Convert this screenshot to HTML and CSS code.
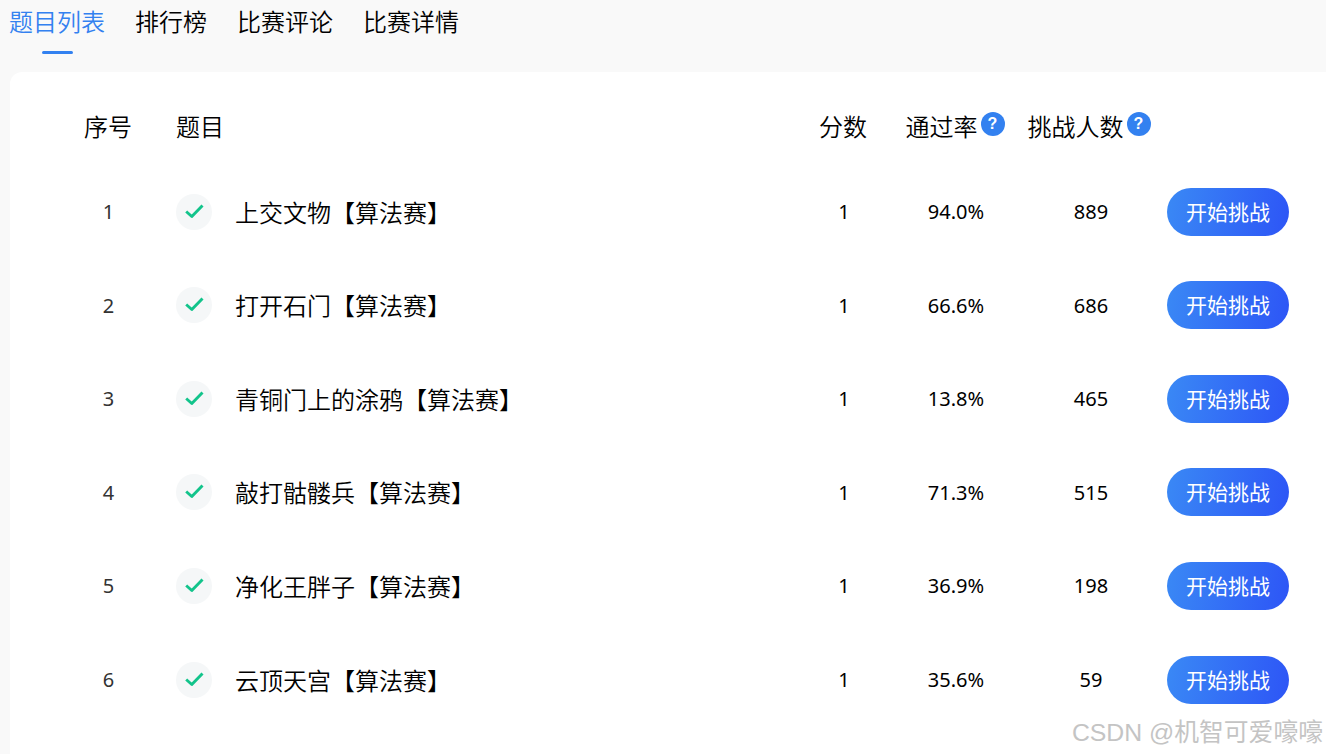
FILE: index.html
```html
<!DOCTYPE html>
<html lang="zh-CN">
<head>
<meta charset="utf-8">
<title>题目列表</title>
<link rel="stylesheet" href="styles.css">
</head>
<body>
<nav class="tabs">
  <a class="tab active">题目列表</a>
  <a class="tab">排行榜</a>
  <a class="tab">比赛评论</a>
  <a class="tab">比赛详情</a>
</nav>
<main class="card">
  <div class="row head">
    <div class="c-num">序号</div>
    <div class="c-title">题目</div>
    <div class="c-center">分数</div>
    <div class="c-center">通过率<span class="help">?</span></div>
    <div class="c-center">挑战人数<span class="help">?</span></div>
    <div></div>
  </div>
  <div class="row">
    <div class="c-num">1</div>
    <div class="c-title"><span class="status"><svg viewBox="0 0 24 24" class="check"><path d="M4.200 11.500 L9.800 16.500 L20.500 5.500"/></svg></span><span class="name">上交文物【算法赛】</span></div>
    <div class="c-center val">1</div><div class="c-center val pct">94.0%</div><div class="c-center val">889</div>
    <div><button class="go">开始挑战</button></div>
  </div>
  <div class="row">
    <div class="c-num">2</div>
    <div class="c-title"><span class="status"><svg viewBox="0 0 24 24" class="check"><path d="M4.200 11.500 L9.800 16.500 L20.500 5.500"/></svg></span><span class="name">打开石门【算法赛】</span></div>
    <div class="c-center val">1</div><div class="c-center val pct">66.6%</div><div class="c-center val">686</div>
    <div><button class="go">开始挑战</button></div>
  </div>
  <div class="row">
    <div class="c-num">3</div>
    <div class="c-title"><span class="status"><svg viewBox="0 0 24 24" class="check"><path d="M4.200 11.500 L9.800 16.500 L20.500 5.500"/></svg></span><span class="name">青铜门上的涂鸦【算法赛】</span></div>
    <div class="c-center val">1</div><div class="c-center val pct">13.8%</div><div class="c-center val">465</div>
    <div><button class="go">开始挑战</button></div>
  </div>
  <div class="row">
    <div class="c-num">4</div>
    <div class="c-title"><span class="status"><svg viewBox="0 0 24 24" class="check"><path d="M4.200 11.500 L9.800 16.500 L20.500 5.500"/></svg></span><span class="name">敲打骷髅兵【算法赛】</span></div>
    <div class="c-center val">1</div><div class="c-center val pct">71.3%</div><div class="c-center val">515</div>
    <div><button class="go">开始挑战</button></div>
  </div>
  <div class="row">
    <div class="c-num">5</div>
    <div class="c-title"><span class="status"><svg viewBox="0 0 24 24" class="check"><path d="M4.200 11.500 L9.800 16.500 L20.500 5.500"/></svg></span><span class="name">净化王胖子【算法赛】</span></div>
    <div class="c-center val">1</div><div class="c-center val pct">36.9%</div><div class="c-center val">198</div>
    <div><button class="go">开始挑战</button></div>
  </div>
  <div class="row">
    <div class="c-num">6</div>
    <div class="c-title"><span class="status"><svg viewBox="0 0 24 24" class="check"><path d="M4.200 11.500 L9.800 16.500 L20.500 5.500"/></svg></span><span class="name">云顶天宫【算法赛】</span></div>
    <div class="c-center val">1</div><div class="c-center val pct">35.6%</div><div class="c-center val">59</div>
    <div><button class="go">开始挑战</button></div>
  </div>
</main>
<div class="watermark">CSDN @机智可爱嚎嚎</div>
</body>
</html>
```
FILE: styles.css
```css
* { box-sizing: border-box; }
html, body { margin: 0; height: 100%; overflow: hidden; }
body {
  background: #f9f9f9;
  font-family: "Noto Sans CJK SC", "Noto Sans", sans-serif;
  font-weight: 350;
  color: #000;
  padding-left: 9px;
}
.tabs { display: flex; gap: 30px; height: 72px; }
.tab {
  position: relative;
  font-size: 24px;
  line-height: 41px;
  color: #000;
}
.tab.active { color: #3381f0; }
.tab.active::after {
  content: "";
  position: absolute;
  left: 33px;
  top: 51px;
  width: 31px;
  height: 3px;
  border-radius: 2px;
  background: #3381f0;
}
.card {
  margin-left: 1px;
  background: #fff;
  border-radius: 12px;
  padding: 16px 0 0 54px;
  height: 700px;
  width: 1330px;
}
.row {
  display: grid;
  grid-template-columns: 88px 648px 86px 140px 128px 135px;
  align-items: center;
  height: 93.6px;
  font-size: 20px;
}
.row > :last-child { padding-left: 13px; }
.head { font-size: 24px; height: 76.8px; }
.head > div { padding-bottom: 2px; }
.c-num { text-align: center; }
.row:not(.head) .c-num { color: #333; font-family: "Noto Sans", sans-serif; font-weight: 400; padding-left: 1px; }
.c-title { display: flex; align-items: center; margin-left: 24px; }
.c-center { display: flex; align-items: center; justify-content: center; }
.val { font-family: "Noto Sans", sans-serif; font-weight: 400; color: #000; padding-left: 2px; }
.val.pct { padding-left: 0; }
.status {
  width: 36px;
  height: 36px;
  border-radius: 50%;
  background: #f5f7f8;
  display: flex;
  align-items: center;
  justify-content: center;
  margin-right: 23px;
  flex: none;
}
.check { width: 24px; height: 24px; fill: none; stroke: #12c48b; stroke-width: 2.900; stroke-linejoin: round; }
.name { font-size: 24px; line-height: 34px; }
.help {
  width: 24px;
  height: 24px;
  border-radius: 50%;
  background: #3381f0;
  color: #fff;
  font-size: 16px;
  font-weight: 700;
  line-height: 24px;
  text-align: center;
  margin: 0 2px 0 3px;
  font-family: "Liberation Sans", sans-serif;
  transform: translateY(-1px);
}
.go {
  display: block;
  width: 122px;
  height: 48px;
  border: 0;
  padding: 0 0 2px;
  border-radius: 24px;
  background: linear-gradient(100deg, #3a89f5, #2d55f6);
  color: #fff;
  font-family: inherit;
  font-weight: 400;
  font-size: 21px;
  line-height: 46px;
}
.watermark {
  position: absolute;
  right: 3px;
  top: 715px;
  font-family: "Liberation Sans", "Noto Sans CJK SC", sans-serif;
  font-weight: 400;
  font-size: 24.800px;
  line-height: 36px;
  color: #c4c4c4;
  white-space: nowrap;
}
```
